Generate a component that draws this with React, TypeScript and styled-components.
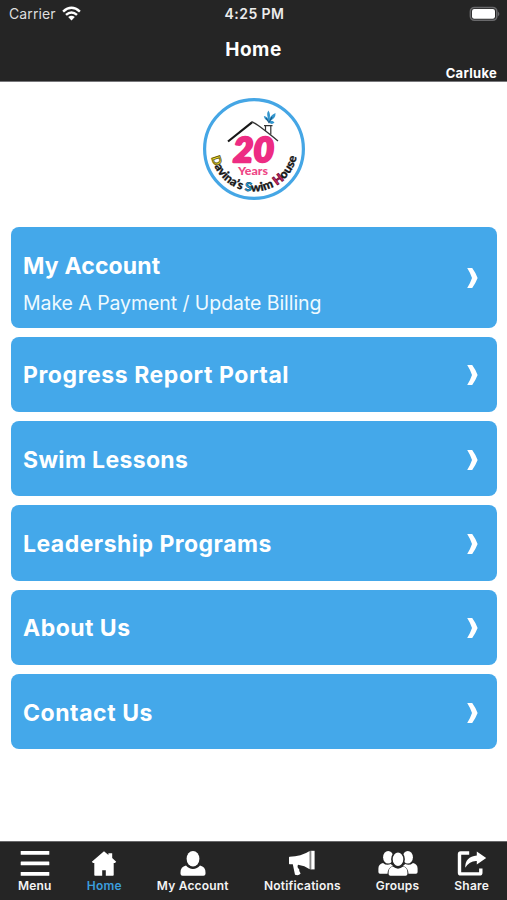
import React from "react";
import styled, { createGlobalStyle } from "styled-components";

const Global = createGlobalStyle`
  * { box-sizing: border-box; }
  body { margin: 0; background: #fff; font-family: Inter, "Liberation Sans", sans-serif; }
`;

const Screen = styled.div`
  width: 507px;
  height: 900px;
  display: flex;
  flex-direction: column;
  background: #fff;
  overflow: hidden;
`;

const Header = styled.header`
  height: 82px;
  background: #252525;
  color: #fff;
  border-bottom: 1px solid #77777a;
  display: flex;
  flex-direction: column;
`;

const StatusBar = styled.div`
  height: 28px;
  padding: 0 7px 0 9px;
  display: grid;
  grid-template-columns: 1fr auto 1fr;
  align-items: center;
`;

const Carrier = styled.div`
  display: flex;
  align-items: center;
  gap: 6px;
  font-size: 14px;
  line-height: 28px;
  letter-spacing: 0.12px;
  color: #dedede;
`;

const Clock = styled.div`
  margin-top: -2px;
  font-size: 14px;
  font-weight: 600;
  letter-spacing: 0.45px;
  color: #ececec;
`;

const BatteryIcon = styled.svg`
  justify-self: end;
  margin-top: -1px;
`;

const Title = styled.h1`
  margin: 10px 0 0;
  font-size: 19px;
  line-height: 24px;
  font-weight: 700;
  letter-spacing: 0.5px;
  text-align: center;
`;

const UserName = styled.div`
  margin-top: 3px;
  padding-right: 10px;
  text-align: right;
  font-size: 13px;
  line-height: 16px;
  font-weight: 700;
  letter-spacing: 0.3px;
`;

const Main = styled.main`
  flex: 1;
  padding: 14.5px 10px 0 11px;
`;

const Logo = styled.svg`
  display: block;
  margin: 0 auto 26.4px 191px;
`;

const CardList = styled.nav`
  display: flex;
  flex-direction: column;
  gap: 8.8px;
`;

const Card = styled.a<{ $tall?: boolean }>`
  height: ${(p) => (p.$tall ? 101 : 75.5)}px;
  padding: 2px 18px 0 12px;
  border-radius: 8px;
  background: #44a8ea;
  color: #fff;
  display: flex;
  align-items: center;
  justify-content: space-between;
`;

const CardText = styled.div`
  display: flex;
  flex-direction: column;
  gap: 11px;
`;

const CardTitle = styled.div<{ $tracking: number }>`
  font-size: 23px;
  line-height: 28px;
  font-weight: 700;
  letter-spacing: ${(p) => p.$tracking}px;
`;

const CardNote = styled.div`
  font-size: 19.5px;
  line-height: 24px;
  letter-spacing: -0.07px;
  margin-bottom: -11px;
  color: #eefaff;
`;

const TabBar = styled.footer`
  height: 59px;
  padding: 7px 18px 0;
  background: #252525;
  border-top: 1px solid #68686a;
  display: flex;
  justify-content: space-between;
`;

const Tab = styled.div<{ $active?: boolean }>`
  display: flex;
  flex-direction: column;
  align-items: center;
  gap: 1px;
  font-size: 12px;
  line-height: 16px;
  font-weight: 600;
  letter-spacing: 0.2px;
  color: ${(p) => (p.$active ? "#3b9ddd" : "#f4f4f4")};
`;

const TabIcon = styled.svg`
  display: block;
  height: 28px;
  fill: #fff;
`;

const WifiIcon = styled.svg`
  margin-top: -2px;
`;

const Wifi = () => (
  <WifiIcon width="19" height="15" viewBox="0 0 19 15" fill="none" stroke="#fff" strokeWidth="2.5">
    <path d="M1.1 5.6 Q9.5 -2 17.9 5.6" />
    <path d="M4 8.9 Q9.5 4.1 15 8.9" />
    <path d="M9.5 14.4 L6.2 11.1 Q9.5 8.2 12.8 11.1 Z" fill="#fff" stroke="none" />
  </WifiIcon>
);

const Battery = () => (
  <BatteryIcon width="31" height="16" viewBox="0 0 31 16">
    <rect x="1.4" y="1.5" width="26.4" height="12.8" rx="4" fill="#252525" stroke="#69696b" strokeWidth="1.6" />
    <rect x="3" y="3" width="23" height="9.8" rx="2.2" fill="#fff" />
    <path d="M29.2 5.6 Q31.4 7.9 29.2 10.2Z" fill="#77777a" />
  </BatteryIcon>
);

const Chevron = () => (
  <svg width="12" height="22" viewBox="0 0 12 22" fill="#fff">
    <path d="M0.2 1 H5.2 Q8.4 5.3 10.6 11 Q8.4 16.7 5.2 21 H0.2 Q3.4 16 5 11 Q3.4 6 0.2 1Z" />
  </svg>
);

const SwimLogo = () => (
  <Logo width="104" height="104" viewBox="0 0 104 104">
    <circle cx="52" cy="52" r="49.4" fill="#fff" stroke="#45a6e5" strokeWidth="3.2" />
    <path d="M26 44.5 L50 25.3" stroke="#171717" strokeWidth="2.2" fill="none" />
    <path d="M49.5 24.6 Q54 26 76 44" stroke="#333" strokeWidth="1.3" fill="none" />
    <path d="M63.5 34 V29 M68.8 29 V37.5 M62 28.6 H70.5" stroke="#333" strokeWidth="1.2" fill="none" />
    <path d="M67 24 Q62.5 23.5 61.8 19 Q65.8 19.7 67 24Z M67 24 Q63.8 17.5 66.3 13.5 Q69.3 17 67 24Z M67 24 Q67.5 18.5 73.5 16 Q74 22 67 24Z M67 25 Q70 22.5 72.5 25.5 Q69.5 28.5 67 25Z" fill="#3295cd" />
    <path d="M64 21 L67 25.5 L70 20" stroke="#195987" strokeWidth="1.2" fill="none" />
    <text x="51.5" y="65" textAnchor="middle" textLength="41" lengthAdjust="spacingAndGlyphs" fontFamily="Lato" fontWeight="900" fontStyle="italic" fontSize="34" fill="#ed2c83" stroke="#ed2c83" strokeWidth="2.4" strokeLinejoin="round">20</text>
    <text x="51" y="78.2" textAnchor="middle" textLength="30" lengthAdjust="spacingAndGlyphs" fontFamily="Lato" fontWeight="900" fontSize="12" fill="#ee4686">Years</text>
    <path id="name-arc" d="M9.4 60.5 A43.7 43.7 0 0 0 94.6 60.5" fill="none" />
    <text fontFamily="Lato" fontWeight="900" fontSize="12" fill="#171717" stroke="#171717" strokeWidth="0.3">
      <textPath href="#name-arc" textLength="118" lengthAdjust="spacingAndGlyphs">
        <tspan fill="#f5df20" stroke="#5c5410" strokeWidth="0.8">D</tspan>avina’s <tspan fill="#20a6df" stroke="#14537a" strokeWidth="0.7">S</tspan>wim <tspan fill="#e42c72" stroke="#731038" strokeWidth="0.9">H</tspan>ouse
      </textPath>
    </text>
  </Logo>
);

const MenuIcon = () => (
  <TabIcon width="30" viewBox="0 0 30 28">
    <rect x="0.7" y="2" width="28.6" height="3.8" rx="0.5" />
    <rect x="0.7" y="12.5" width="28.6" height="3.8" rx="0.5" />
    <rect x="0.7" y="23" width="28.6" height="3.8" rx="0.5" />
  </TabIcon>
);
const HomeIcon = () => (
  <TabIcon width="26" viewBox="0 0 26 28">
    <path d="M13 2.2 L17.4 5.9 V4.2 H21.2 V9.1 L25.2 12.7 L24 14 H22.7 V26 Q22.7 26.8 21.9 26.8 H14.8 V21.2 H11.2 V26.8 H4.1 Q3.3 26.8 3.3 26 V14 H2 L0.8 12.7Z" />
  </TabIcon>
);
const PersonIcon = () => (
  <TabIcon width="26" viewBox="0 0 26 28">
    <ellipse cx="13" cy="9.8" rx="6.4" ry="7.8" />
    <path d="M6 16.6 Q8.8 20 13 20 Q17.2 20 20 16.6 Q25.5 17.8 25.5 23.5 V24.8 Q25.5 26.8 23.5 26.8 H2.5 Q0.5 26.8 0.5 24.8 V23.5 Q0.5 17.8 6 16.6Z" />
  </TabIcon>
);
const MegaphoneIcon = () => (
  <TabIcon width="28" viewBox="0 0 28 28">
    <path d="M1.6 7.8 Q13 7.6 21.7 2 V20.2 Q16.8 16.8 10 15.8 Q8.7 18.3 11.2 20.3 Q10.7 22.4 12.6 24.6 Q10.8 27 7 25.8 Q6 21 4.8 15.3 H1.6 Q1 15.3 1 14.5 V8.5 Q1 7.8 1.6 7.8Z" />
    <path d="M22.5 1.8 H26.6 V20.4 H22.5Z" />
    <path d="M22.9 2 V20.3" stroke="#777" strokeWidth="0.8" />
  </TabIcon>
);
const GroupIcon = () => (
  <TabIcon width="40" viewBox="0 0 40 28">
    <ellipse cx="10.2" cy="8.2" rx="5.1" ry="6.3" />
    <ellipse cx="29.8" cy="8.2" rx="5.1" ry="6.3" />
    <path d="M5 13.9 Q8.5 16.9 12.8 15 L15 17 Q9.7 18.5 9.5 24.8 H2 Q0.4 24.8 0.4 23 V19.5 Q0.4 14.9 5 13.9Z" />
    <path d="M35 13.9 Q31.5 16.9 27.2 15 L25 17 Q30.3 18.5 30.5 24.8 H38 Q39.6 24.8 39.6 23 V19.5 Q39.6 14.9 35 13.9Z" />
    <ellipse cx="20" cy="10.3" rx="6.1" ry="7.5" stroke="#252525" strokeWidth="1.6" />
    <path d="M14.8 17.5 Q20 21.8 25.2 17.5 Q29.4 18.7 29.4 23.2 V25 Q29.4 26.8 27.6 26.8 H12.4 Q10.6 26.8 10.6 25 V23.2 Q10.6 18.7 14.8 17.5Z" />
  </TabIcon>
);
const ShareIcon = () => (
  <TabIcon width="30" viewBox="0 0 30 28">
    <path d="M12.2 4 H3.7 Q2.5 4 2.5 5.2 V23.7 Q2.5 24.9 3.7 24.9 H22.5 Q23.8 24.9 23.8 23.7 V19.5" fill="none" stroke="#fff" strokeWidth="3.4" />
    <path d="M19.8 2.5 L29.2 9 L19.8 15.6 V12 Q12.8 11.5 8.2 18.8 Q8 7.5 19.8 6.4Z" />
  </TabIcon>
);

const links = [
  { label: "Progress Report Portal", tracking: 0.57 },
  { label: "Swim Lessons", tracking: 0.35 },
  { label: "Leadership Programs", tracking: 0.47 },
  { label: "About Us", tracking: 0.48 },
  { label: "Contact Us", tracking: 0.55 },
];

const tabs = [
  { label: "Menu", Icon: MenuIcon },
  { label: "Home", Icon: HomeIcon, active: true },
  { label: "My Account", Icon: PersonIcon },
  { label: "Notifications", Icon: MegaphoneIcon },
  { label: "Groups", Icon: GroupIcon },
  { label: "Share", Icon: ShareIcon },
];

export default function App() {
  return (
    <Screen>
      <Global />
      <Header>
        <StatusBar>
          <Carrier>Carrier <Wifi /></Carrier>
          <Clock>4:25 PM</Clock>
          <Battery />
        </StatusBar>
        <Title>Home</Title>
        <UserName>Carluke</UserName>
      </Header>
      <Main>
        <SwimLogo />
        <CardList>
          <Card $tall>
            <CardText>
              <CardTitle $tracking={0.15}>My Account</CardTitle>
              <CardNote>Make A Payment / Update Billing</CardNote>
            </CardText>
            <Chevron />
          </Card>
          {links.map(({ label, tracking }) => (
            <Card key={label}>
              <CardTitle $tracking={tracking}>{label}</CardTitle>
              <Chevron />
            </Card>
          ))}
        </CardList>
      </Main>
      <TabBar>
        {tabs.map(({ label, Icon, active }) => (
          <Tab key={label} $active={active}>
            <Icon />
            {label}
          </Tab>
        ))}
      </TabBar>
    </Screen>
  );
}
